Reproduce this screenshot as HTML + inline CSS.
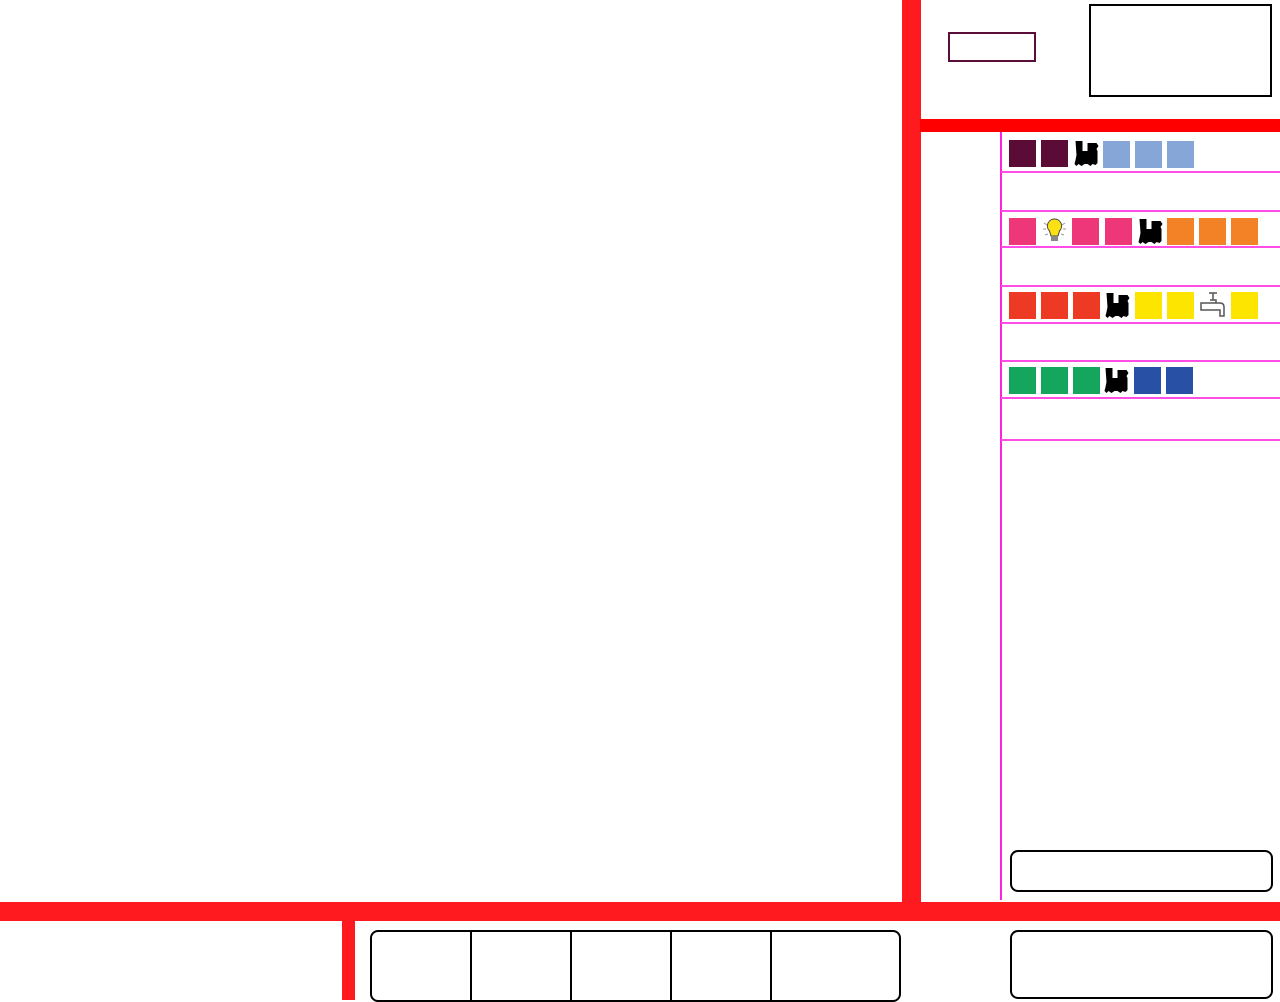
<!DOCTYPE html>
<html><head><meta charset="utf-8"><style>
*{margin:0;padding:0;box-sizing:border-box}
body{width:1280px;height:1000px;position:relative;background:#fff;overflow:hidden;font-family:"Liberation Sans",sans-serif}
.a{position:absolute}
.r{background:#ff1a1f}
.p{background:#ff4de6;height:2px;left:1001px;width:279px}
.s{position:absolute;width:27px;height:27px}
</style></head><body>
<div class="a r" style="left:902px;top:0;width:19px;height:910px"></div>
<div class="a r" style="left:0;top:902px;width:1280px;height:19px"></div>
<div class="a" style="left:920px;top:119px;width:360px;height:13px;background:#ff0000"></div>
<div class="a r" style="left:342px;top:920px;width:13px;height:80px"></div>
<div class="a" style="left:1000px;top:132px;width:2px;height:768px;background:#ff22dd"></div>
<div class="a p" style="top:171px"></div>
<div class="a p" style="top:210px"></div>
<div class="a p" style="top:246px"></div>
<div class="a p" style="top:285px"></div>
<div class="a p" style="top:322px"></div>
<div class="a p" style="top:360px"></div>
<div class="a p" style="top:397px"></div>
<div class="a p" style="top:439px"></div>
<div class="a" style="left:948px;top:32px;width:88px;height:30px;border:2px solid #5a0f38"></div>
<div class="a" style="left:1089px;top:4px;width:183px;height:93px;border:2px solid #000"></div>
<div class="a" style="left:1010px;top:850px;width:263px;height:42px;border:2px solid #000;border-radius:8px"></div>
<div class="a" style="left:1010px;top:930px;width:263px;height:69px;border:2px solid #000;border-radius:8px"></div>
<div class="a" style="left:370px;top:930px;width:531px;height:72px;border:2px solid #000;border-radius:8px"></div>
<div class="a" style="left:470px;top:931px;width:2px;height:69px;background:#000"></div>
<div class="a" style="left:570px;top:931px;width:2px;height:69px;background:#000"></div>
<div class="a" style="left:670px;top:931px;width:2px;height:69px;background:#000"></div>
<div class="a" style="left:770px;top:931px;width:2px;height:69px;background:#000"></div>

<svg width="0" height="0" style="position:absolute"><defs>
<symbol id="t" viewBox="0 0 26 27"><path d="M2 1h7v10h5V3h9l2 3-2 3 1 2v12l-2 2-3-1-2 2-3-2h-3l-3 2-3-2-2 2-2-2 1-4 1-5z" fill="#000"/></symbol>
</defs></svg>

<div class="s" style="left:1009px;top:140px;background:#5a0c36"></div>
<div class="s" style="left:1041px;top:140px;background:#5a0c36"></div>
<svg class="s" style="left:1073px;top:140px"><use href="#t"/></svg>
<div class="s" style="left:1103px;top:141px;background:#87a6d8"></div>
<div class="s" style="left:1135px;top:141px;background:#87a6d8"></div>
<div class="s" style="left:1167px;top:141px;background:#87a6d8"></div>

<div class="s" style="left:1009px;top:218px;background:#ee3779"></div>
<svg class="s" style="left:1041px;top:217px" viewBox="0 0 27 27"><g stroke="#999" stroke-width="1"><path d="M3 6l3 2M24 6l-3 2M2 12h3M25 12h-3M4 18l3-1M23 18l-3-1"/></g><path d="M13.5 2a7 7 0 0 0-5 12l1.5 5h7l1.5-5a7 7 0 0 0-5-12z" fill="#fbe014" stroke="#444"/><rect x="10" y="19" width="7" height="5" fill="#888"/></svg>
<div class="s" style="left:1072px;top:218px;background:#ee3779"></div>
<div class="s" style="left:1105px;top:218px;background:#ee3779"></div>
<svg class="s" style="left:1137px;top:218px"><use href="#t"/></svg>
<div class="s" style="left:1167px;top:218px;background:#f38226"></div>
<div class="s" style="left:1199px;top:218px;background:#f38226"></div>
<div class="s" style="left:1231px;top:218px;background:#f38226"></div>

<div class="s" style="left:1009px;top:292px;background:#ee3a24"></div>
<div class="s" style="left:1041px;top:292px;background:#ee3a24"></div>
<div class="s" style="left:1073px;top:292px;background:#ee3a24"></div>
<svg class="s" style="left:1104px;top:292px"><use href="#t"/></svg>
<div class="s" style="left:1135px;top:292px;background:#fde500"></div>
<div class="s" style="left:1167px;top:292px;background:#fde500"></div>
<svg class="s" style="left:1199px;top:292px" viewBox="0 0 27 27"><path d="M10 1h8M14 1v7M11 8h6v3M2 11h19q4 0 4 4v9h-4v-6H2z" fill="none" stroke="#555" stroke-width="1.5"/></svg>
<div class="s" style="left:1231px;top:292px;background:#fde500"></div>

<div class="s" style="left:1009px;top:367px;background:#14a65d"></div>
<div class="s" style="left:1041px;top:367px;background:#14a65d"></div>
<div class="s" style="left:1073px;top:367px;background:#14a65d"></div>
<svg class="s" style="left:1103px;top:367px"><use href="#t"/></svg>
<div class="s" style="left:1134px;top:367px;background:#2850a4"></div>
<div class="s" style="left:1166px;top:367px;background:#2850a4"></div>
</body></html>
